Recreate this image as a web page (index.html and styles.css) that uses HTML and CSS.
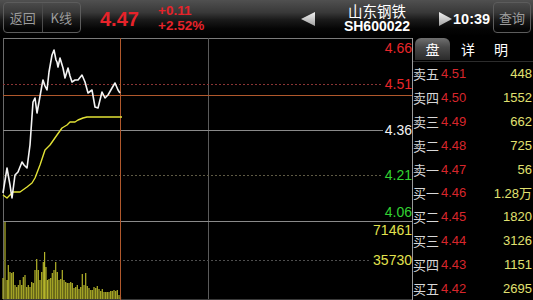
FILE: index.html
```html
<!DOCTYPE html>
<html lang="zh">
<head>
<meta charset="utf-8">
<title>山东钢铁 SH600022</title>
<link rel="stylesheet" href="styles.css">
</head>
<body>
<div class="app">
  <header class="topbar">
    <div class="btn-group">
      <span class="btn">返回</span>
      <span class="btn">K线</span>
    </div>
    <div class="price">4.47</div>
    <div class="change">
      <span>+0.11</span>
      <span>+2.52%</span>
    </div>
    <svg class="tri" width="14" height="14" viewBox="0 0 14 14">
      <defs>
        <linearGradient id="tg" x1="0" y1="0" x2="0" y2="1">
          <stop offset="0" stop-color="#f2f2f2"/>
          <stop offset="1" stop-color="#a0a0a0"/>
        </linearGradient>
      </defs>
      <polygon points="0,7 14,0 14,14" fill="url(#tg)"/>
    </svg>
    <div class="title">
      <span class="name">山东钢铁</span>
      <span class="code">SH600022</span>
    </div>
    <svg class="tri" width="13" height="14" viewBox="0 0 13 14">
      <polygon points="13,7 0,0 0,14" fill="url(#tg)"/>
    </svg>
    <div class="time">10:39</div>
    <span class="btn query">查询</span>
  </header>

  <main class="body">
    <section class="chart">
      <svg class="plot" width="413" height="264" viewBox="0 36 413 264">
        <line x1="3" y1="38.5" x2="412" y2="38.5" stroke="#7a7a7a"/>
        <line x1="3.5" y1="38" x2="3.5" y2="300" stroke="#6a6a6a"/>
        <line x1="208.5" y1="38" x2="208.5" y2="300" stroke="#5a5a5a"/>
        <line x1="412.5" y1="38" x2="412.5" y2="300" stroke="#9a9a9a"/>
        <line x1="3" y1="130.5" x2="412" y2="130.5" stroke="#8a8a8a"/>
        <line x1="3" y1="221.5" x2="412" y2="221.5" stroke="#8a8a8a"/>
        <line x1="3" y1="84.5" x2="412" y2="84.5" stroke="#8a3434" stroke-dasharray="2 2"/>
        <line x1="3" y1="175.5" x2="412" y2="175.5" stroke="#5e5a44" stroke-dasharray="2 2"/>
        <line x1="3" y1="260.5" x2="412" y2="260.5" stroke="#4e4e4e" stroke-dasharray="2 2"/>
        <line x1="3" y1="299.5" x2="412" y2="299.5" stroke="#3a3a3a"/>

        <path class="vol" d="M3 299V278M5 299V222M7 299V280M8.3 299V265M10 299V272M11.7 299V273M13.3 299V272M15 299V285M16.7 299V287M18.3 299V285M20 299V280M21.7 299V285M23.3 299V277M25 299V275M26.7 299V287M28.3 299V285M30 299V287M31.7 299V282M33.3 299V283M35 299V270M36.7 299V259M38.3 299V270M40 299V280M41.7 299V272M43.3 299V262M44.6 299V252M46 299V267M47.5 299V280M49 299V279M50.7 299V278M52.3 299V273M54 299V270M55.7 299V262M57.3 299V272M59 299V280M60.7 299V279M62.3 299V270M64 299V280M65.7 299V282M67.3 299V283M69 299V283M70.7 299V282M72.3 299V283M74 299V288M75.7 299V287M77.3 299V285M79 299V289M80.7 299V287M82.3 299V274M84 299V285M85.7 299V273M87.3 299V286M89 299V288M90.7 299V290M92.3 299V290M94 299V287M95.7 299V288M97.3 299V286M99 299V289M100.7 299V291M102.3 299V289M104 299V292M105.7 299V292M107.3 299V292M109 299V292M110.7 299V291M112.3 299V291M114 299V290M115.7 299V291M117.3 299V290M119 299V295M120.5 299V297"/>

        <line x1="120.5" y1="38" x2="120.5" y2="300" stroke="#b0582c"/>
        <line x1="3" y1="95.5" x2="412" y2="95.5" stroke="#b0582c"/>

        <polyline class="avg" points="3,195 7,198 13,192 20,192 27,187 32,183 35,178 40,165 45,150 50,145 57,135 62,128 67,125 70,122 75,122 78,120 83,118 87,117 122,117"/>
        <polyline class="line" points="3,193 7,168 10,185 12,198 15,175 18,172 22,162 24,165 27,168 30,145 33,102 35,98 37,113 39,102 42,85 43,80 45,86 47,90 49,72 52,55 54,50 56,60 57,62 58,67 60,58 63,68 65,78 68,68 70,76 72,82 75,80 78,80 82,75 85,82 88,93 92,90 95,107 98,108 102,92 105,98 108,95 112,88 115,83 118,90 120,93"/>
      </svg>
      <span class="axis red" style="top:5px">4.66</span>
      <span class="axis red" style="top:41px">4.51</span>
      <span class="axis white" style="top:87px">4.36</span>
      <span class="axis green" style="top:132px">4.21</span>
      <span class="axis green" style="top:169px">4.06</span>
      <span class="axis yellow" style="top:187px">71461</span>
      <span class="axis yellow" style="top:217px">35730</span>
    </section>

    <aside class="panel">
      <nav class="tabs">
        <span class="tab active">盘</span>
        <span class="tab">详</span>
        <span class="tab">明</span>
      </nav>
      <ul class="book">
        <li class="row"><span class="lbl">卖五</span><span class="px">4.51</span><span class="qty">448</span></li>
        <li class="row"><span class="lbl">卖四</span><span class="px">4.50</span><span class="qty">1552</span></li>
        <li class="row"><span class="lbl">卖三</span><span class="px">4.49</span><span class="qty">662</span></li>
        <li class="row"><span class="lbl">卖二</span><span class="px">4.48</span><span class="qty">725</span></li>
        <li class="row"><span class="lbl">卖一</span><span class="px">4.47</span><span class="qty">56</span></li>
        <li class="row"><span class="lbl">买一</span><span class="px">4.46</span><span class="qty">1.28万</span></li>
        <li class="row"><span class="lbl">买二</span><span class="px">4.45</span><span class="qty">1820</span></li>
        <li class="row"><span class="lbl">买三</span><span class="px">4.44</span><span class="qty">3126</span></li>
        <li class="row"><span class="lbl">买四</span><span class="px">4.43</span><span class="qty">1151</span></li>
        <li class="row"><span class="lbl">买五</span><span class="px">4.42</span><span class="qty">2695</span></li>
      </ul>
    </aside>
  </main>
</div>
</body>
</html>
```

FILE: styles.css
```css
* { box-sizing: border-box; }
html, body {
  margin: 0;
  padding: 0;
  background: #000;
}
body {
  width: 533px;
  height: 300px;
  overflow: hidden;
  font-family: "Liberation Sans", "Noto Sans CJK SC", sans-serif;
  color: #fff;
}
.app {
  width: 533px;
  height: 300px;
  display: flex;
  flex-direction: column;
}

/* ---------- top bar ---------- */
.topbar {
  height: 36px;
  flex: none;
  display: flex;
  align-items: center;
  background: linear-gradient(to bottom, #505050 0%, #383838 35%, #1a1a1a 55%, #050505 80%, #000 100%);
}
.btn-group {
  margin-left: 3px;
  width: 78px;
  height: 31px;
  border: 1px solid #5c5c5c;
  border-radius: 4px;
  display: flex;
  align-self: flex-start;
  margin-top: 2px;
}
.btn {
  flex: 1;
  display: flex;
  align-items: center;
  justify-content: center;
  font-family: "Noto Sans CJK SC", sans-serif;
  font-size: 13px;
  color: #9c9c9c;
}
.btn-group .btn + .btn {
  border-left: 1px solid #4c4c4c;
}
.price {
  margin-left: 19px;
  width: 39px;
  font-size: 20px;
  font-weight: bold;
  color: #e6232a;
  line-height: 20px;
  margin-top: 1px;
}
.change {
  margin-left: 19px;
  width: 50px;
  display: flex;
  flex-direction: column;
  gap: 1px;
  align-self: flex-start;
  padding-top: 4px;
  font-size: 13.5px;
  font-weight: bold;
  color: #e6232a;
  line-height: 14px;
}
.tri {
  flex: none;
  margin-top: 2px;
}
.tri:first-of-type { margin-left: 93px; }
.title {
  width: 124px;
  display: flex;
  flex-direction: column;
  align-items: center;
  gap: 1px;
  align-self: flex-start;
  padding-top: 3px;
}
.name {
  font-family: "Noto Sans CJK SC", sans-serif;
  font-size: 14.5px;
  line-height: 15px;
  color: #fff;
}
.code {
  font-size: 14px;
  font-weight: bold;
  line-height: 14px;
  color: #fff;
}
.time {
  margin-left: 1px;
  width: 38px;
  font-size: 14.5px;
  font-weight: bold;
  color: #fff;
  margin-top: 2px;
}
.query {
  flex: none;
  margin-left: 2px;
  width: 38px;
  height: 31px;
  align-self: flex-start;
  margin-top: 2px;
  border: 1px solid #5c5c5c;
  border-radius: 4px;
}

/* ---------- body ---------- */
.body {
  flex: 1;
  display: flex;
  min-height: 0;
}
.chart {
  position: relative;
  width: 413px;
  height: 264px;
  flex: none;
}
.plot {
  display: block;
}
.vol {
  stroke: #b4b42a;
  stroke-width: 1.2;
  fill: none;
}
.avg {
  fill: none;
  stroke: #e2e236;
  stroke-width: 1.4;
  stroke-linejoin: round;
}
.line {
  fill: none;
  stroke: #f4f4f4;
  stroke-width: 1.6;
  stroke-linejoin: round;
}
.axis {
  position: absolute;
  right: 1px;
  font-size: 14px;
  line-height: 14px;
  padding-left: 2px;
  background: #000;
}
.red { color: #e8262a; }
.white { color: #f2f2f2; }
.green { color: #32d232; }
.yellow { color: #e2e24e; }

/* ---------- right panel ---------- */
.panel {
  flex: 1;
  display: flex;
  flex-direction: column;
}
.tabs {
  height: 26px;
  flex: none;
  display: flex;
  padding-top: 2px;
  padding-left: 2px;
  border-bottom: 1px solid #2c2c2c;
}
.tab {
  display: flex;
  align-items: center;
  justify-content: center;
  width: 35px;
  height: 22px;
  font-family: "Noto Sans CJK SC", sans-serif;
  font-size: 14px;
  color: #fff;
}
.tab:nth-child(2) { width: 36px; }
.tab:nth-child(3) { width: 30px; }
.tab.active {
  border-radius: 6px 6px 0 0;
  background: linear-gradient(to bottom, #707070 0%, #4a4a4a 40%, #2a2a2a 100%);
}
.book {
  list-style: none;
  margin: 0;
  padding: 0;
  flex: 1;
  display: flex;
  flex-direction: column;
}
.row {
  flex: 1;
  display: flex;
  align-items: center;
  padding-right: 1px;
}
.lbl {
  width: 28px;
  font-family: "Noto Sans CJK SC", sans-serif;
  font-size: 13px;
  color: #d8d8d8;
}
.px {
  font-size: 13px;
  color: #d8262c;
}
.qty {
  margin-left: auto;
  font-size: 13px;
  color: #e0e070;
  font-family: "Liberation Sans", "Noto Sans CJK SC", sans-serif;
}
```
